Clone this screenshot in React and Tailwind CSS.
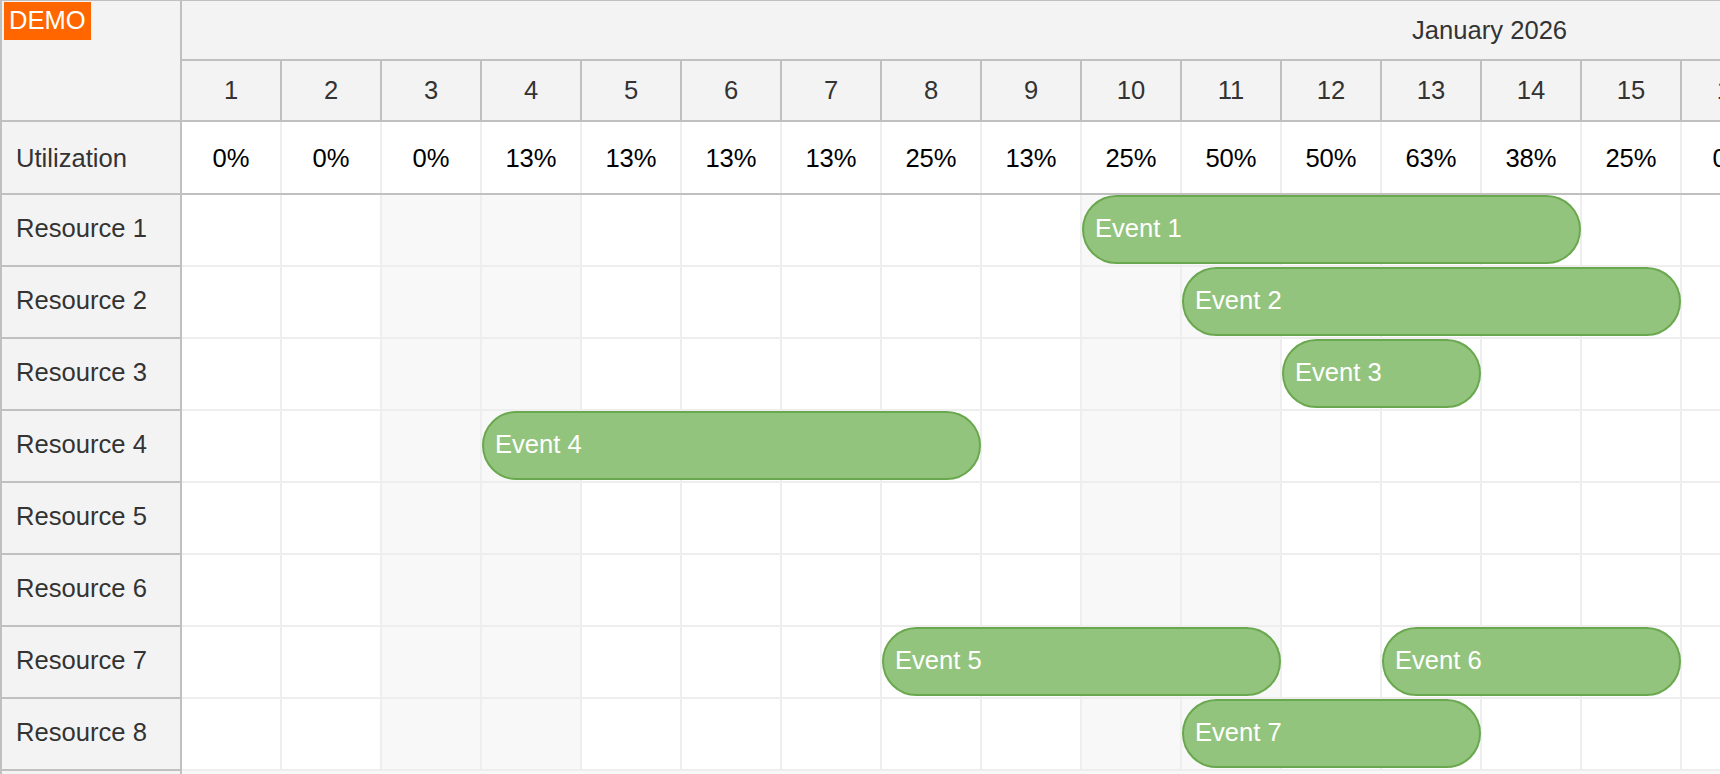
import React from 'react'

const days = Array.from({ length: 31 }, (_, i) => i + 1)

const resources = Array.from({ length: 8 }, (_, i) => `Resource ${i + 1}`)

// start day, number of days, resource row index
const events = [
    { id: 1, text: 'Event 1', start: 10, days: 5, row: 0 },
    { id: 2, text: 'Event 2', start: 11, days: 5, row: 1 },
    { id: 3, text: 'Event 3', start: 12, days: 2, row: 2 },
    { id: 4, text: 'Event 4', start: 4, days: 5, row: 3 },
    { id: 5, text: 'Event 5', start: 8, days: 4, row: 6 },
    { id: 6, text: 'Event 6', start: 13, days: 3, row: 6 },
    { id: 7, text: 'Event 7', start: 11, days: 3, row: 7 },
]

// Jan 1 2026 is a Thursday
const isWeekend = (d) => {
    const dow = (d + 3) % 7
    return dow === 6 || dow === 0
}

const utilization = (d) => {
    const busy = events.filter((e) => d >= e.start && d < e.start + e.days).length
    return Math.round((busy / resources.length) * 100) + '%'
}

const font = { fontFamily: '"Liberation Sans", Arial, sans-serif' }

const App = () => {
    return (
        <div className="w-[1720px] h-[774px] overflow-hidden bg-white text-[25.6px] text-[#333]" style={font}>
            <div className="flex h-full">
                {/* Row headers */}
                <div className="w-[182px] shrink-0 bg-[#f3f3f3] border-l-2 border-r-2 border-t border-[#c0c0c0]">
                    <div className="h-[121px] border-b-2 border-[#c0c0c0] relative">
                        <span className="absolute left-[2px] top-[1px] h-[38px] px-[5px] flex items-center bg-[#ff6600] text-white leading-none">
                            DEMO
                        </span>
                    </div>
                    <div className="h-[73px] border-b-2 border-[#c0c0c0] flex items-center pl-[14px] pt-[2px]">
                        Utilization
                    </div>
                    {resources.map((r) => (
                        <div key={r} className="h-[72px] border-b-2 border-[#c0c0c0] flex items-center pl-[14px] pb-[3px]">
                            {r}
                        </div>
                    ))}
                    <div className="h-[72px]" />
                </div>

                {/* Timeline */}
                <div className="flex-1 overflow-hidden">
                    <div className="w-[3100px]">
                        <div className="h-[61px] bg-[#f3f3f3] border-t border-b-2 border-[#c0c0c0] flex items-center pl-[1230px]">
                            January 2026
                        </div>
                        <div className="h-[61px] bg-[#f3f3f3] border-b-2 border-[#c0c0c0] flex">
                            {days.map((d) => (
                                <div key={d} className="w-[100px] shrink-0 border-r-2 border-[#c0c0c0] flex items-center justify-center">
                                    {d}
                                </div>
                            ))}
                        </div>
                        <div className="h-[73px] border-b-2 border-[#c0c0c0] flex text-black">
                            {days.map((d) => (
                                <div key={d} className="w-[100px] shrink-0 border-r-2 border-[#eeeeee] flex items-center justify-center pt-[2px]">
                                    {utilization(d)}
                                </div>
                            ))}
                        </div>
                        {resources.map((r, i) => (
                            <div key={r} className="h-[72px] border-b-2 border-[#eeeeee] relative">
                                <div className="flex h-full">
                                    {days.map((d) => (
                                        <div
                                            key={d}
                                            className={`w-[100px] shrink-0 border-r-2 border-[#eeeeee] ${isWeekend(d) ? 'bg-[#f8f8f8]' : 'bg-white'}`}
                                        />
                                    ))}
                                </div>
                                {events.filter((e) => e.row === i).map((e) => (
                                    <div
                                        key={e.id}
                                        className="absolute top-0 h-[69px] rounded-full bg-[#93c47d] border-2 border-[#6aa84f] text-white flex items-center pl-[11px] pb-[2px]"
                                        style={{ left: (e.start - 1) * 100, width: e.days * 100 - 1 }}
                                    >
                                        {e.text}
                                    </div>
                                ))}
                            </div>
                        ))}
                        <div className="h-[72px] bg-[#f8f8f8]" />
                    </div>
                </div>
            </div>
        </div>
    )
}

export default App
